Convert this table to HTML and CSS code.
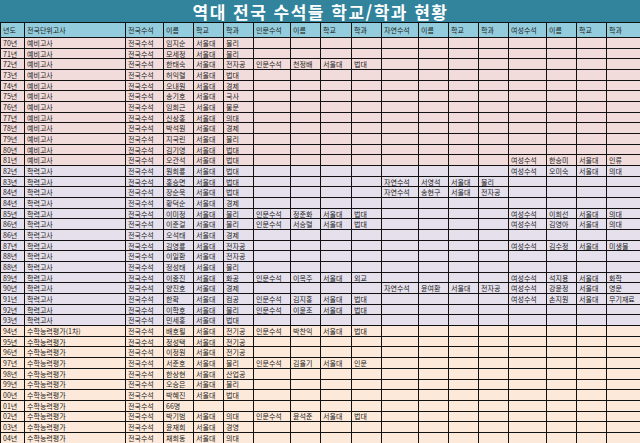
FILE: index.html
```html
<!DOCTYPE html>
<html lang="ko">
<head>
<meta charset="utf-8">
<link rel="stylesheet" href="styles.css">
</head>
<body>
<div class="title">역대 전국 수석들 학교/학과 현황</div>
<table class="sheet">
<colgroup>
<col class="w24"><col class="w101"><col class="w38"><col class="w30"><col class="w30"><col class="w30">
<col class="w37"><col class="w30"><col class="w31"><col class="w30">
<col class="w37"><col class="w30"><col class="w30"><col class="w30">
<col class="w38"><col class="w30"><col class="w30"><col class="w34">
</colgroup>
<thead>
<tr><th>년도</th><th>전국단위고사</th><th>전국수석</th><th>이름</th><th>학교</th><th>학과</th><th>인문수석</th><th>이름</th><th>학교</th><th>학과</th><th>자연수석</th><th>이름</th><th>학교</th><th>학과</th><th>여성수석</th><th>이름</th><th>학교</th><th>학과</th></tr>
</thead>
<tbody>
<tr class="pink"><td>70년</td><td>예비고사</td><td>전국수석</td><td>임지순</td><td>서울대</td><td>물리</td><td></td><td></td><td></td><td></td><td></td><td></td><td></td><td></td><td></td><td></td><td></td><td></td></tr>
<tr class="pink"><td>71년</td><td>예비고사</td><td>전국수석</td><td>모세정</td><td>서울대</td><td>물리</td><td></td><td></td><td></td><td></td><td></td><td></td><td></td><td></td><td></td><td></td><td></td><td></td></tr>
<tr class="pink"><td>72년</td><td>예비고사</td><td>전국수석</td><td>한태숙</td><td>서울대</td><td>전자공</td><td>인문수석</td><td>천정배</td><td>서울대</td><td>법대</td><td></td><td></td><td></td><td></td><td></td><td></td><td></td><td></td></tr>
<tr class="pink"><td>73년</td><td>예비고사</td><td>전국수석</td><td>허익렬</td><td>서울대</td><td>법대</td><td></td><td></td><td></td><td></td><td></td><td></td><td></td><td></td><td></td><td></td><td></td><td></td></tr>
<tr class="pink"><td>74년</td><td>예비고사</td><td>전국수석</td><td>오내원</td><td>서울대</td><td>경제</td><td></td><td></td><td></td><td></td><td></td><td></td><td></td><td></td><td></td><td></td><td></td><td></td></tr>
<tr class="pink"><td>75년</td><td>예비고사</td><td>전국수석</td><td>송기호</td><td>서울대</td><td>국사</td><td></td><td></td><td></td><td></td><td></td><td></td><td></td><td></td><td></td><td></td><td></td><td></td></tr>
<tr class="pink"><td>76년</td><td>예비고사</td><td>전국수석</td><td>임희근</td><td>서울대</td><td>불문</td><td></td><td></td><td></td><td></td><td></td><td></td><td></td><td></td><td></td><td></td><td></td><td></td></tr>
<tr class="pink"><td>77년</td><td>예비고사</td><td>전국수석</td><td>신상홍</td><td>서울대</td><td>의대</td><td></td><td></td><td></td><td></td><td></td><td></td><td></td><td></td><td></td><td></td><td></td><td></td></tr>
<tr class="pink"><td>78년</td><td>예비고사</td><td>전국수석</td><td>박석원</td><td>서울대</td><td>경제</td><td></td><td></td><td></td><td></td><td></td><td></td><td></td><td></td><td></td><td></td><td></td><td></td></tr>
<tr class="pink"><td>79년</td><td>예비고사</td><td>전국수석</td><td>지국린</td><td>서울대</td><td>물리</td><td></td><td></td><td></td><td></td><td></td><td></td><td></td><td></td><td></td><td></td><td></td><td></td></tr>
<tr class="pink"><td>80년</td><td>예비고사</td><td>전국수석</td><td>김기영</td><td>서울대</td><td>법대</td><td></td><td></td><td></td><td></td><td></td><td></td><td></td><td></td><td></td><td></td><td></td><td></td></tr>
<tr class="pink"><td>81년</td><td>예비고사</td><td>전국수석</td><td>오관석</td><td>서울대</td><td>법대</td><td></td><td></td><td></td><td></td><td></td><td></td><td></td><td></td><td>여성수석</td><td>한승미</td><td>서울대</td><td>인류</td></tr>
<tr class="lav"><td>82년</td><td>학력고사</td><td>전국수석</td><td>원희룡</td><td>서울대</td><td>법대</td><td></td><td></td><td></td><td></td><td></td><td></td><td></td><td></td><td>여성수석</td><td>오미숙</td><td>서울대</td><td>의대</td></tr>
<tr class="lav"><td>83년</td><td>학력고사</td><td>전국수석</td><td>홍승면</td><td>서울대</td><td>법대</td><td></td><td></td><td></td><td></td><td>자연수석</td><td>서영석</td><td>서울대</td><td>물리</td><td></td><td></td><td></td><td></td></tr>
<tr class="lav"><td>84년</td><td>학력고사</td><td>전국수석</td><td>장순욱</td><td>서울대</td><td>법대</td><td></td><td></td><td></td><td></td><td>자연수석</td><td>송현구</td><td>서울대</td><td>전자공</td><td></td><td></td><td></td><td></td></tr>
<tr class="lav"><td>84년</td><td>학력고사</td><td>전국수석</td><td>황덕순</td><td>서울대</td><td>경제</td><td></td><td></td><td></td><td></td><td></td><td></td><td></td><td></td><td></td><td></td><td></td><td></td></tr>
<tr class="lav"><td>85년</td><td>학력고사</td><td>전국수석</td><td>이미정</td><td>서울대</td><td>물리</td><td>인문수석</td><td>정준화</td><td>서울대</td><td>법대</td><td></td><td></td><td></td><td></td><td>여성수석</td><td>이희선</td><td>서울대</td><td>의대</td></tr>
<tr class="lav"><td>86년</td><td>학력고사</td><td>전국수석</td><td>이준걸</td><td>서울대</td><td>물리</td><td>인문수석</td><td>서승렬</td><td>서울대</td><td>법대</td><td></td><td></td><td></td><td></td><td>여성수석</td><td>김영아</td><td>서울대</td><td>의대</td></tr>
<tr class="lav"><td>86년</td><td>학력고사</td><td>전국수석</td><td>오석태</td><td>서울대</td><td>경제</td><td></td><td></td><td></td><td></td><td></td><td></td><td></td><td></td><td></td><td></td><td></td><td></td></tr>
<tr class="lav"><td>87년</td><td>학력고사</td><td>전국수석</td><td>김영룡</td><td>서울대</td><td>전자공</td><td></td><td></td><td></td><td></td><td></td><td></td><td></td><td></td><td>여성수석</td><td>김수정</td><td>서울대</td><td>미생물</td></tr>
<tr class="lav"><td>88년</td><td>학력고사</td><td>전국수석</td><td>이일환</td><td>서울대</td><td>전자공</td><td></td><td></td><td></td><td></td><td></td><td></td><td></td><td></td><td></td><td></td><td></td><td></td></tr>
<tr class="lav"><td>88년</td><td>학력고사</td><td>전국수석</td><td>정성태</td><td>서울대</td><td>물리</td><td></td><td></td><td></td><td></td><td></td><td></td><td></td><td></td><td></td><td></td><td></td><td></td></tr>
<tr class="lav"><td>89년</td><td>학력고사</td><td>전국수석</td><td>이종진</td><td>서울대</td><td>화공</td><td>인문수석</td><td>이옥주</td><td>서울대</td><td>외교</td><td></td><td></td><td></td><td></td><td>여성수석</td><td>석지용</td><td>서울대</td><td>화학</td></tr>
<tr class="lav"><td>90년</td><td>학력고사</td><td>전국수석</td><td>양진호</td><td>서울대</td><td>경제</td><td></td><td></td><td></td><td></td><td>자연수석</td><td>윤여환</td><td>서울대</td><td>전자공</td><td>여성수석</td><td>강윤정</td><td>서울대</td><td>영문</td></tr>
<tr class="lav"><td>91년</td><td>학력고사</td><td>전국수석</td><td>한확</td><td>서울대</td><td>컴공</td><td>인문수석</td><td>김지홍</td><td>서울대</td><td>법대</td><td></td><td></td><td></td><td></td><td>여성수석</td><td>손지원</td><td>서울대</td><td>무기재료</td></tr>
<tr class="lav"><td>92년</td><td>학력고사</td><td>전국수석</td><td>이학호</td><td>서울대</td><td>물리</td><td>인문수석</td><td>이윤조</td><td>서울대</td><td>법대</td><td></td><td></td><td></td><td></td><td></td><td></td><td></td><td></td></tr>
<tr class="lav"><td>93년</td><td>학력고사</td><td>전국수석</td><td>민세홍</td><td>서울대</td><td>법대</td><td></td><td></td><td></td><td></td><td></td><td></td><td></td><td></td><td></td><td></td><td></td><td></td></tr>
<tr class="peach"><td>94년</td><td>수학능력평가(1차)</td><td>전국수석</td><td>배호필</td><td>서울대</td><td>전기공</td><td>인문수석</td><td>박찬익</td><td>서울대</td><td>법대</td><td></td><td></td><td></td><td></td><td></td><td></td><td></td><td></td></tr>
<tr class="peach"><td>95년</td><td>수학능력평가</td><td>전국수석</td><td>정성택</td><td>서울대</td><td>전기공</td><td></td><td></td><td></td><td></td><td></td><td></td><td></td><td></td><td></td><td></td><td></td><td></td></tr>
<tr class="peach"><td>96년</td><td>수학능력평가</td><td>전국수석</td><td>이정원</td><td>서울대</td><td>전기공</td><td></td><td></td><td></td><td></td><td></td><td></td><td></td><td></td><td></td><td></td><td></td><td></td></tr>
<tr class="peach"><td>97년</td><td>수학능력평가</td><td>전국수석</td><td>서준호</td><td>서울대</td><td>물리</td><td>인문수석</td><td>김율기</td><td>서울대</td><td>인문</td><td></td><td></td><td></td><td></td><td></td><td></td><td></td><td></td></tr>
<tr class="peach"><td>98년</td><td>수학능력평가</td><td>전국수석</td><td>한상현</td><td>서울대</td><td>산업공</td><td></td><td></td><td></td><td></td><td></td><td></td><td></td><td></td><td></td><td></td><td></td><td></td></tr>
<tr class="peach"><td>99년</td><td>수학능력평가</td><td>전국수석</td><td>오승은</td><td>서울대</td><td>물리</td><td></td><td></td><td></td><td></td><td></td><td></td><td></td><td></td><td></td><td></td><td></td><td></td></tr>
<tr class="peach"><td>00년</td><td>수학능력평가</td><td>전국수석</td><td>박혜진</td><td>서울대</td><td>법대</td><td></td><td></td><td></td><td></td><td></td><td></td><td></td><td></td><td></td><td></td><td></td><td></td></tr>
<tr class="peach"><td>01년</td><td>수학능력평가</td><td>전국수석</td><td>66명</td><td></td><td></td><td></td><td></td><td></td><td></td><td></td><td></td><td></td><td></td><td></td><td></td><td></td><td></td></tr>
<tr class="peach"><td>02년</td><td>수학능력평가</td><td>전국수석</td><td>박기범</td><td>서울대</td><td>의대</td><td>인문수석</td><td>윤석준</td><td>서울대</td><td>법대</td><td></td><td></td><td></td><td></td><td></td><td></td><td></td><td></td></tr>
<tr class="peach"><td>03년</td><td>수학능력평가</td><td>전국수석</td><td>윤재희</td><td>서울대</td><td>경영</td><td></td><td></td><td></td><td></td><td></td><td></td><td></td><td></td><td></td><td></td><td></td><td></td></tr>
<tr class="peach"><td>04년</td><td>수학능력평가</td><td>전국수석</td><td>채희동</td><td>서울대</td><td>의대</td><td></td><td></td><td></td><td></td><td></td><td></td><td></td><td></td><td></td><td></td><td></td><td></td></tr>
</tbody>
</table>
</body>
</html>
```
FILE: styles.css
```css
html, body {
  margin: 0;
  padding: 0;
}
body {
  width: 640px;
  height: 443px;
  overflow: hidden;
  background: #ffffff;
  font-family: "Noto Sans CJK KR", "Noto Sans", sans-serif;
}
.title {
  height: 22px;
  background: #31849b;
  color: #ffffff;
  font-weight: bold;
  font-size: 17px;
  letter-spacing: 1.5px;
  display: flex;
  align-items: center;
  justify-content: center;
  padding-left: 1px;
}
.sheet {
  width: 640px;
  table-layout: fixed;
  border-collapse: collapse;
  font-size: 7px;
  color: #222222;
}
.w24 { width: 24px; }
.w101 { width: 101px; }
.w38 { width: 38px; }
.w37 { width: 37px; }
.w34 { width: 34px; }
.w31 { width: 31px; }
.w30 { width: 30px; }
.sheet th,
.sheet td {
  border: 1px solid #111111;
  padding: 0 0 0 2px;
  white-space: nowrap;
  overflow: hidden;
  line-height: 8px;
  text-align: left;
  font-weight: normal;
}
.sheet thead tr {
  height: 15px;
  background: #93cddd;
}
.sheet tbody tr {
  height: 10.68px;
}
.pink { background: #f2dcdb; }
.lav { background: #e5e0ec; }
.peach { background: #fde9d9; }
```
